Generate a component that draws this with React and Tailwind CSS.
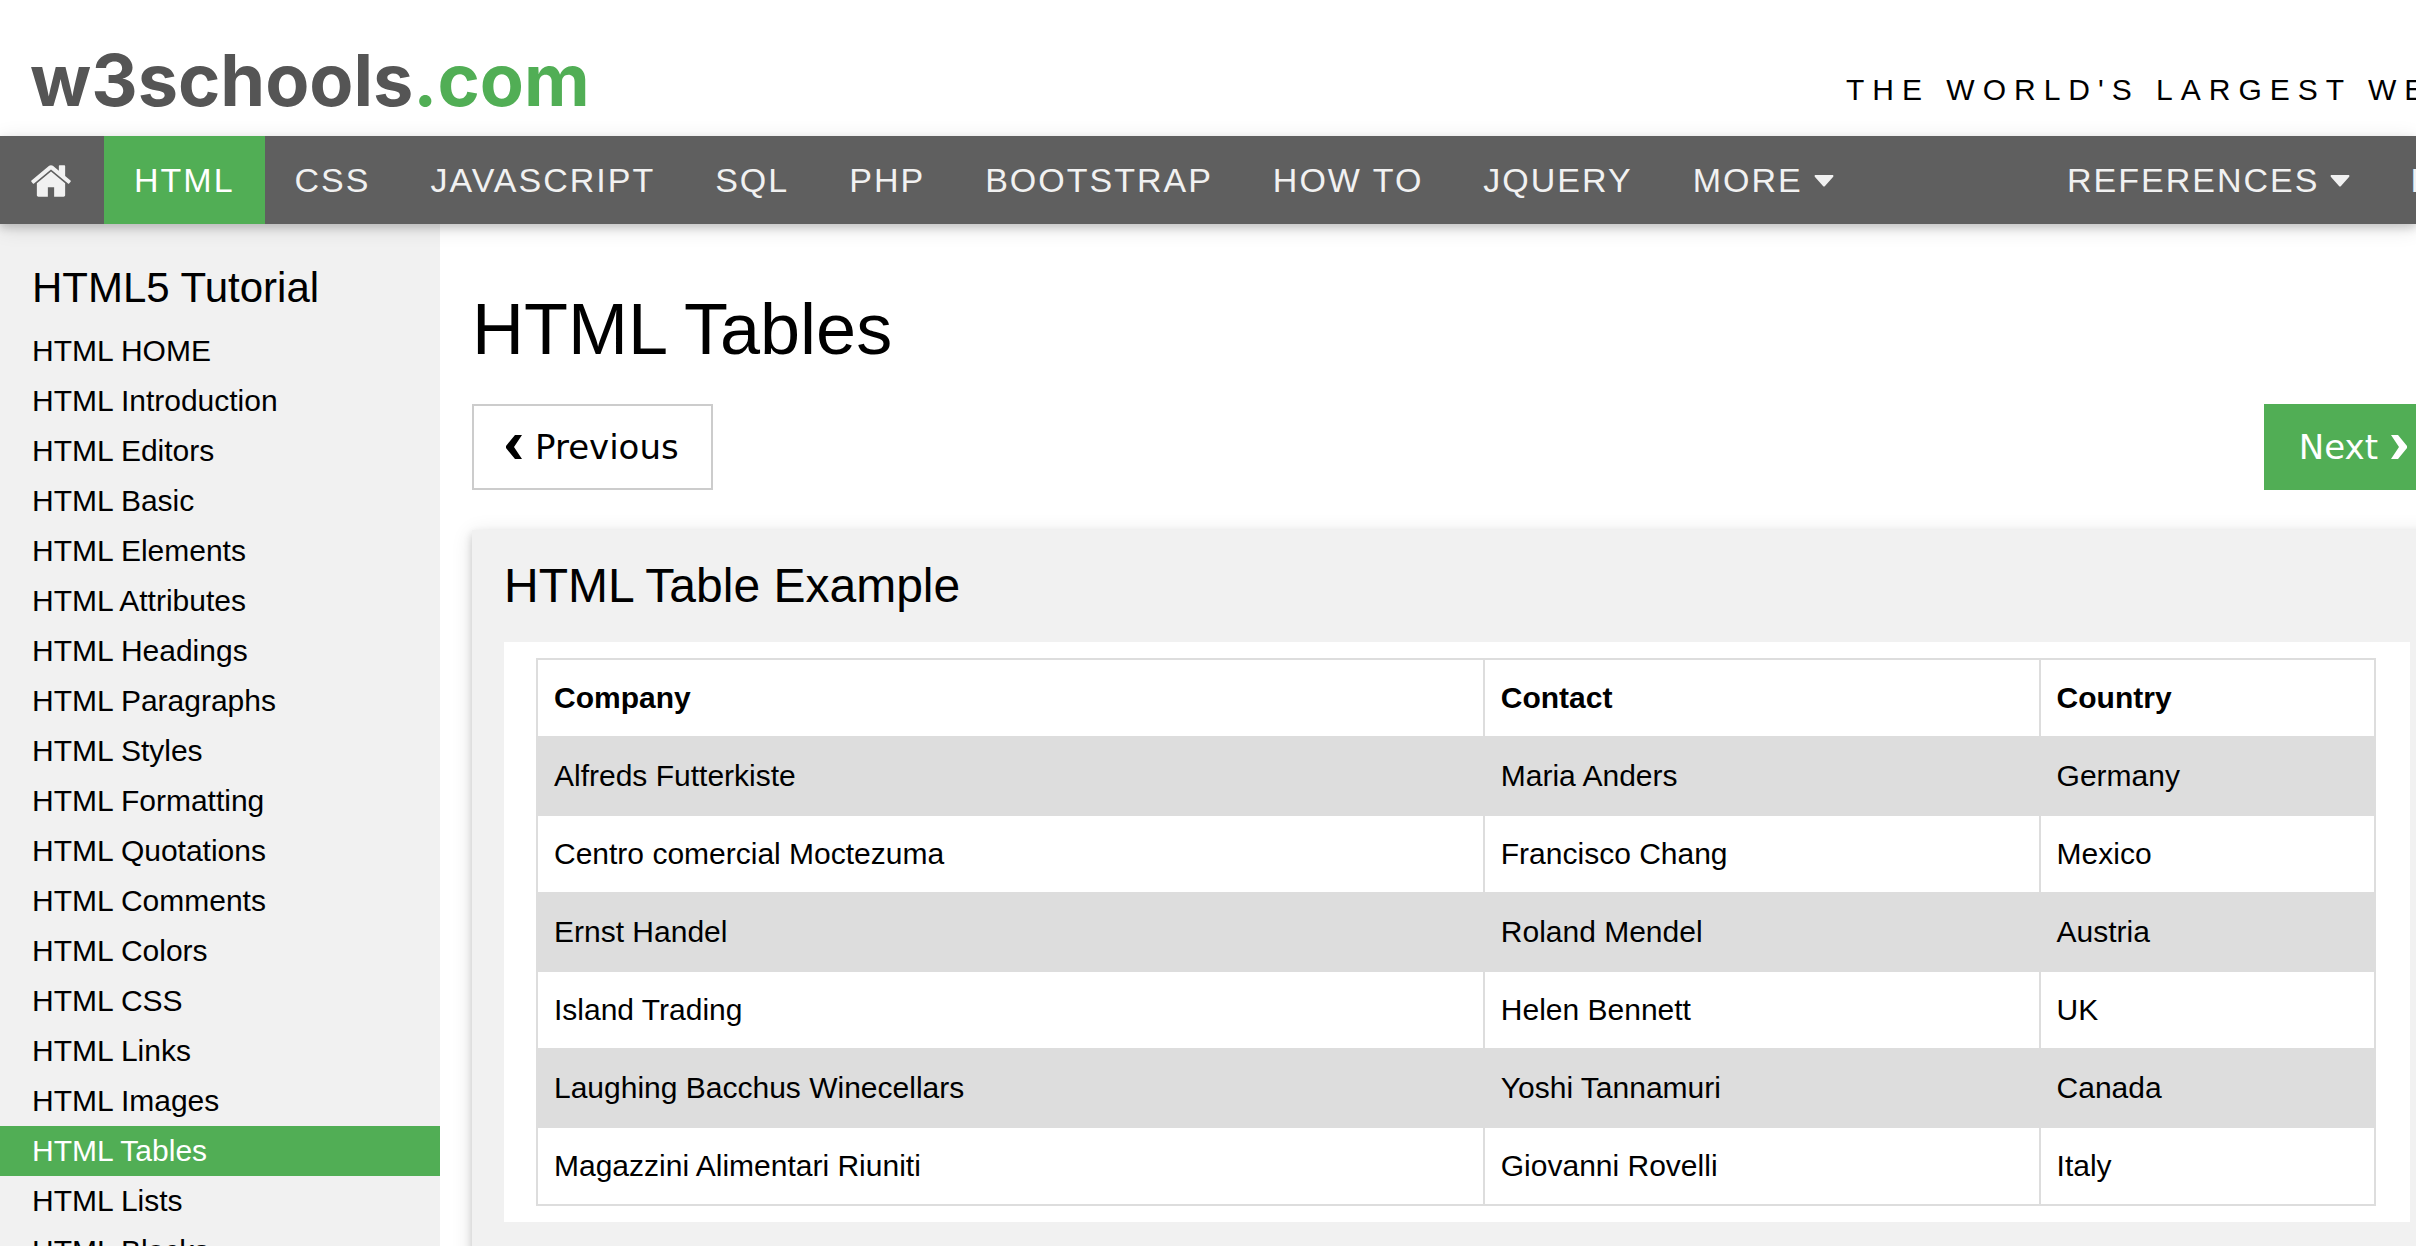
const navLinks = ["CSS", "JAVASCRIPT", "SQL", "PHP", "BOOTSTRAP", "HOW TO", "JQUERY"];

const chapters = [
  "HTML HOME",
  "HTML Introduction",
  "HTML Editors",
  "HTML Basic",
  "HTML Elements",
  "HTML Attributes",
  "HTML Headings",
  "HTML Paragraphs",
  "HTML Styles",
  "HTML Formatting",
  "HTML Quotations",
  "HTML Comments",
  "HTML Colors",
  "HTML CSS",
  "HTML Links",
  "HTML Images",
  "HTML Tables",
  "HTML Lists",
  "HTML Blocks",
];

const companies = [
  ["Alfreds Futterkiste", "Maria Anders", "Germany"],
  ["Centro comercial Moctezuma", "Francisco Chang", "Mexico"],
  ["Ernst Handel", "Roland Mendel", "Austria"],
  ["Island Trading", "Helen Bennett", "UK"],
  ["Laughing Bacchus Winecellars", "Yoshi Tannamuri", "Canada"],
  ["Magazzini Alimentari Riuniti", "Giovanni Rovelli", "Italy"],
];

function HomeIcon() {
  return (
    <svg viewBox="0 0 1792 1792" className="size-11 fill-current" aria-hidden="true">
      <path d="M1472 992v480q0 26-19 45t-45 19h-384v-384h-256v384h-384q-26 0-45-19t-19-45v-480q0-1 .5-3t.5-3l575-474 575 474q1 2 1 6zm223-69l-62 74q-8 9-21 11h-3q-13 0-21-7l-692-577-692 577q-12 8-24 7-13-2-21-11l-62-74q-8-10-7-23.5t11-21.5l719-599q32-26 76-26t76 26l244 204v-195q0-14 9-23t23-9h192q14 0 23 9t9 23v408l219 182q10 8 11 21.5t-7 23.5z" />
    </svg>
  );
}

function Caret() {
  return (
    <svg viewBox="0 0 20 12" className="mt-0.5 ml-[11px] h-3 w-5 fill-current" aria-hidden="true">
      <path d="M1 0H19Q20 1 19 2L11 11Q10 12 9 11L1 2Q0 1 1 0Z" />
    </svg>
  );
}

function Chevron({ right }) {
  return (
    <svg viewBox="0 0 16 24" className="h-6 w-4 fill-current" aria-hidden="true">
      <path
        d={right ? "M7 0H0L8 12L0 24H7L16 13V11Z" : "M9 0H16L8 12L16 24H9L0 13V11Z"}
      />
    </svg>
  );
}

function NavLink({ children, active }) {
  return (
    <a
      href="#"
      className={
        active
          ? "flex items-center bg-[#51ae55] px-[30px] text-white"
          : "flex items-center px-[30px]"
      }
    >
      {children}
    </a>
  );
}

export default function App() {
  return (
    <div className="h-screen overflow-hidden bg-white font-['Liberation_Sans',Arial,sans-serif] text-[30px] text-black">
      <header className="flex items-end justify-between pt-10 pb-4 pl-[30px]">
        <a
          href="#"
          className="font-['Inter','Liberation_Sans',sans-serif] text-[72px] leading-[80px] font-bold text-[#555555]"
        >
          w3schools<span className="text-[#51ae55]">.com</span>
        </a>
        <p className="mb-2 w-[570px] overflow-hidden leading-11 tracking-[8px] whitespace-nowrap">
          THE WORLD'S LARGEST WEB DEVELOPER SITE
        </p>
      </header>

      <nav className="relative z-10 flex h-[88px] justify-between bg-[#5f5f5f] text-[34px] tracking-[2px] whitespace-nowrap text-[#f1f1f1] shadow-[0_4px_8px_rgba(0,0,0,0.16),0_4px_20px_rgba(0,0,0,0.12)]">
        <div className="flex">
          <a href="#" aria-label="Home" className="flex w-[104px] items-center pt-0.5 pl-[29px]">
            <HomeIcon />
          </a>
          <NavLink active>HTML</NavLink>
          {navLinks.map((label) => (
            <NavLink key={label}>{label}</NavLink>
          ))}
          <NavLink>
            MORE
            <Caret />
          </NavLink>
        </div>
        <div className="flex w-[379px] overflow-hidden">
          <NavLink>
            REFERENCES
            <Caret />
          </NavLink>
          <NavLink>EXAMPLES</NavLink>
        </div>
      </nav>

      <div className="flex">
        <aside className="w-[440px] shrink-0 bg-[#f1f1f1] pt-[34px]">
          <h2 className="mb-2 pl-8 text-[42px] leading-[60px]">HTML5 Tutorial</h2>
          {chapters.map((label) => (
            <a
              key={label}
              href="#"
              className={
                label === "HTML Tables"
                  ? "block bg-[#51ae55] pl-8 leading-[50px] text-white"
                  : "block pl-8 leading-[50px]"
              }
            >
              {label}
            </a>
          ))}
        </aside>

        <main className="-mr-[26px] min-w-0 flex-1 pt-[51px] pl-8">
          <h1 className="mb-[21px] text-[72px] leading-[108px]">HTML Tables</h1>
          <div className="mb-10 flex justify-between font-['DejaVu_Sans',Verdana,sans-serif] text-[34px]">
            <a
              href="#"
              className="flex h-[86px] items-center gap-[13px] border-2 border-[#cccccc] px-8"
            >
              <Chevron />
              Previous
            </a>
            <a
              href="#"
              className="flex h-[86px] items-center gap-[13px] border-2 border-[#51ae55] bg-[#51ae55] px-[33px] text-white"
            >
              Next
              <Chevron right />
            </a>
          </div>

          <section className="bg-[#f1f1f1] px-8 pt-5 pb-16 shadow-[0_4px_8px_rgba(0,0,0,0.16),0_4px_20px_rgba(0,0,0,0.12)]">
            <h2 className="mb-5 text-[48px] leading-[72px]">HTML Table Example</h2>
            <div className="bg-white py-4 pr-[34px] pl-8">
              <table className="w-full border-collapse border-2 border-[#dddddd] text-left">
                <thead>
                  <tr>
                    {["Company", "Contact", "Country"].map((label) => (
                      <th
                        key={label}
                        className="h-[78px] border-2 border-[#dddddd] px-4 pb-0.5 font-bold"
                      >
                        {label}
                      </th>
                    ))}
                  </tr>
                </thead>
                <tbody>
                  {companies.map((row) => (
                    <tr key={row[0]} className="odd:bg-[#dddddd]">
                      {row.map((cell) => (
                        <td key={cell} className="h-[78px] border-2 border-[#dddddd] px-4 pb-0.5">
                          {cell}
                        </td>
                      ))}
                    </tr>
                  ))}
                </tbody>
              </table>
            </div>
          </section>
        </main>
      </div>
    </div>
  );
}
